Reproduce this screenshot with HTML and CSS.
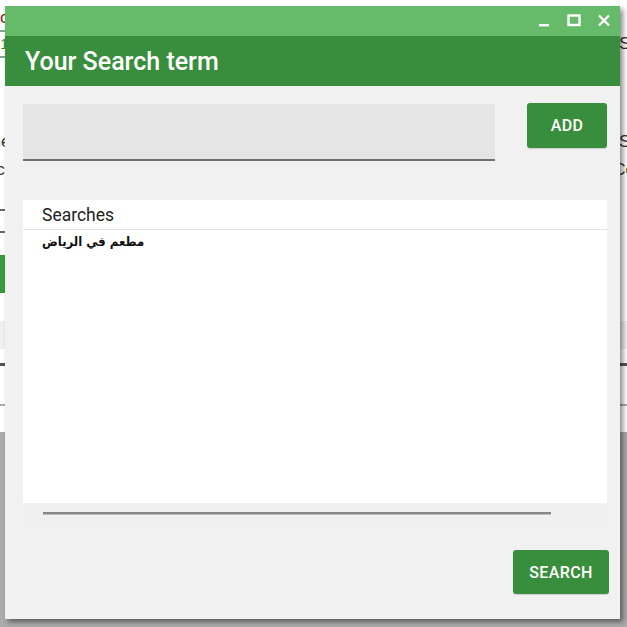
FILE: index.html
```html
<!DOCTYPE html>
<html>
<head>
<meta charset="utf-8">
<link rel="stylesheet" href="styles.css">
</head>
<body>
<div class="page">
  <div class="bg-top">clicks the button and chooses a search</div>
  <div class="bg-row bg-icon-row"><span class="bg-icon">1</span><span class="bg-right-text">St</span></div>
  <div class="bg-row bg-text-row"><span class="bg-left-text">one</span><span class="bg-right-text">St</span></div>
  <div class="bg-row bg-text-row2"><span class="bg-left-text">etc</span><span class="bg-right-text">Co</span></div>
  <div class="bg-row bg-check-row"><span class="bg-check"></span></div>
  <div class="bg-row bg-btn-row"><span class="bg-btn">Go</span></div>
  <div class="bg-band"></div>
  <div class="bg-line-dark"></div>
  <div class="bg-white"></div>
  <div class="bg-line-gray"></div>
  <div class="bg-white2"></div>
  <div class="bg-footer"></div>
</div>

<div class="dialog">
  <div class="titlebar">
    <svg class="ctrl" width="14" height="14" viewBox="0 0 14 14"><rect x="2" y="10" width="10" height="2.4" fill="#fff"/></svg>
    <svg class="ctrl" width="14" height="14" viewBox="0 0 14 14"><rect x="1.5" y="1.5" width="11" height="9.5" fill="none" stroke="#fff" stroke-width="2.4"/></svg>
    <svg class="ctrl" width="14" height="14" viewBox="0 0 14 14"><path d="M2 1.5 L12 11.5 M12 1.5 L2 11.5" stroke="#fff" stroke-width="2.4" fill="none"/></svg>
  </div>
  <div class="header">Your Search term</div>
  <div class="content">
    <div class="input-row">
      <div class="input"></div>
      <button class="btn btn-add">ADD</button>
    </div>
    <div class="list">
      <div class="list-body">
        <div class="list-head">Searches</div>
        <div class="list-item" dir="rtl">مطعم في الرياض</div>
      </div>
      <div class="list-scroll"><div class="scroll-line"></div></div>
    </div>
    <div class="footer">
      <button class="btn btn-search">SEARCH</button>
    </div>
  </div>
</div>
</body>
</html>
```

FILE: styles.css
```css
html, body {
  margin: 0;
  padding: 0;
  width: 627px;
  height: 627px;
  overflow: hidden;
  background: #fff;
}

.page {
  width: 627px;
  height: 627px;
  display: flex;
  flex-direction: column;
  font-family: "Liberation Sans", Arial, sans-serif;
  font-size: 16px;
  color: #222;
}

.bg-top {
  height: 40px;
  line-height: 40px;
  color: #7a1f1f;
  font-size: 17px;
  margin-top: -2px;
}

.bg-row {
  display: flex;
  justify-content: space-between;
  align-items: center;
}

.bg-icon-row { height: 32px; margin-top: -10px; }
.bg-icon {
  width: 14px;
  height: 24px;
  margin-left: -8px;
  border: 2px solid #8aa58a;
  color: #3a8a3a;
  font-size: 14px;
  line-height: 24px;
  text-align: right;
}

.bg-text-row { height: 32px; margin-top: 66px; }
.bg-text-row2 { height: 24px; }
.bg-left-text { margin-left: -18px; color: #333; font-size: 17px; }
.bg-right-text { margin-right: -8px; color: #333; font-size: 17px; }

.bg-check-row { height: 32px; margin-top: 23px; }
.bg-check {
  width: 18px;
  height: 20px;
  margin-left: -14px;
  border: 2px solid #666;
}

.bg-btn-row { height: 38px; margin-top: 18px; }
.bg-btn {
  width: 40px;
  height: 38px;
  margin-left: -35px;
  background: #3a9a3a;
  color: #fff;
  font-size: 12px;
}

.bg-band { height: 28px; margin-top: 28px; background: #f0f0f0; }
.bg-line-dark { height: 3px; margin-top: 14px; background: #555; }
.bg-white { height: 38px; }
.bg-line-gray { height: 2px; background: #aaa; }
.bg-white2 { height: 26px; }
.bg-footer { flex: 1; background: #ababab; }

/* dialog window overlaying the page */
.dialog {
  position: absolute;
  left: 5px;
  top: 6px;
  width: 615px;
  height: 613px;
  background: #f1f1f1;
  box-shadow: 3px 3px 5px rgba(0,0,0,0.45);
  display: flex;
  flex-direction: column;
  font-family: Roboto, "Liberation Sans", sans-serif;
}

.titlebar {
  height: 30px;
  background: #66bb6a;
  display: flex;
  justify-content: flex-end;
  align-items: center;
  gap: 16px;
  padding-right: 9px;
}

.ctrl { display: block; }

.header {
  height: 50px;
  background: #388e3c;
  color: #fff;
  font-size: 25px;
  font-weight: 500;
  line-height: 51px;
  padding-left: 20px;
}

.content {
  flex: 1;
  display: flex;
  flex-direction: column;
  padding: 17px 13px 0 18px;
}

.input-row {
  display: flex;
  justify-content: space-between;
  align-items: flex-start;
}

.input {
  width: 472px;
  height: 55px;
  margin-top: 1px;
  background: #e5e5e5;
  border-bottom: 2px solid #6e6e6e;
}

.btn {
  border: none;
  background: #388e3c;
  color: #fff;
  font-family: Roboto, "Liberation Sans", sans-serif;
  font-size: 16px;
  font-weight: 500;
  letter-spacing: 0.4px;
  border-radius: 3px;
  padding: 0;
  box-shadow: 0 1px 1px rgba(0,0,0,0.15);
}

.btn-add {
  width: 80px;
  height: 45px;
}

.list {
  margin-top: 39px;
  display: flex;
  flex-direction: column;
}

.list-body {
  height: 303px;
  background: #fff;
}

.list-head {
  height: 29px;
  line-height: 30px;
  padding-left: 19px;
  font-size: 17.5px;
  color: #222;
  border-bottom: 1px solid #e2e2e2;
}

.list-item {
  margin-left: 19px;
  width: max-content;
  font-family: "DejaVu Sans Condensed", "DejaVu Sans", sans-serif;
  font-size: 13px;
  font-weight: bold;
  color: #111;
  line-height: 24px;
}

.list-scroll {
  height: 20px;
  background: #f0f0f0;
  display: flex;
  align-items: center;
  padding-left: 20px;
}

.scroll-line {
  width: 508px;
  height: 2px;
  background: #888;
  border-bottom: 1px solid #bbb;
}

.footer {
  display: flex;
  justify-content: flex-end;
  margin-top: 27px;
  margin-right: -2px;
}

.btn-search {
  width: 96px;
  height: 44px;
}
```
